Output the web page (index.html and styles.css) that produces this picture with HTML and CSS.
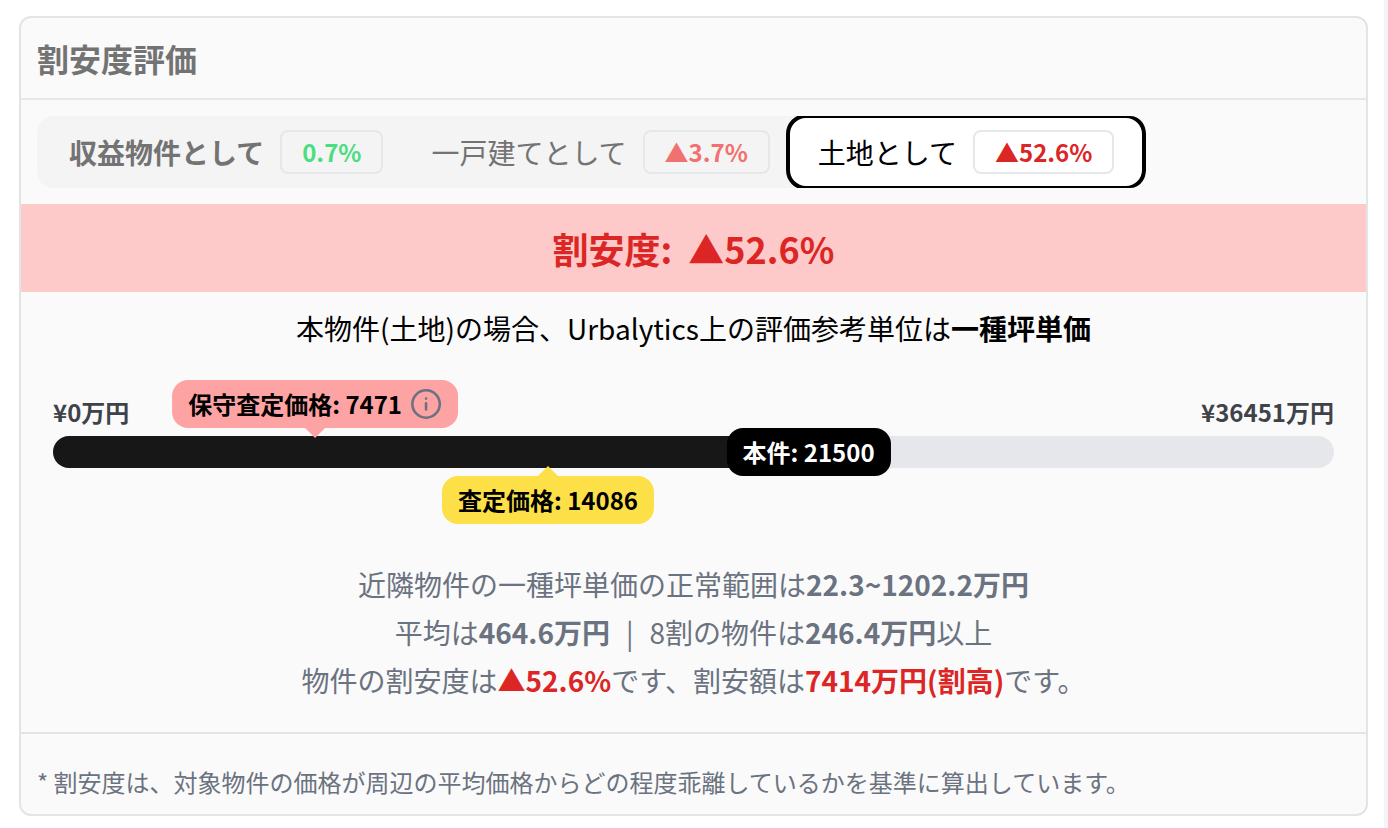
FILE: index.html
```html
<!DOCTYPE html>
<html lang="ja">
<head>
<meta charset="utf-8">
<meta name="viewport" content="width=device-width, initial-scale=1">
<title>割安度評価</title>
<link rel="stylesheet" href="styles.css">
</head>
<body>
<main class="page">
  <section class="card">
    <header class="card-header">
      <h1 class="card-title">割安度評価</h1>
    </header>
    <div class="tabs-row">
      <div class="tabs" role="tablist">
        <button class="tab tab-strong" type="button" role="tab" aria-selected="false">収益物件として<span class="badge badge-up">0.7%</span></button>
        <button class="tab" type="button" role="tab" aria-selected="false">一戸建てとして<span class="badge badge-down">▲3.7%</span></button>
        <button class="tab tab-active" type="button" role="tab" aria-selected="true">土地として<span class="badge badge-active">▲52.6%</span></button>
      </div>
    </div>
    <div class="banner"><span>割安度:</span><span>▲52.6%</span></div>
    <p class="lead">本物件(土地)の場合、Urbalytics上の評価参考単位は<b>一種坪単価</b></p>
    <div class="gauge">
      <div class="scale"><span>¥0万円</span><span>¥36451万円</span></div>
      <div class="track">
        <div class="fill" style="width: 58.98%"></div>
        <div class="marker marker-low" style="left: 20.46%">保守査定価格: 7471
          <svg class="info" viewBox="0 0 32 32" aria-hidden="true">
            <circle cx="16" cy="16" r="13.7"/>
            <path d="M16 15.2v6.2M16 10.5v.1"/>
          </svg>
        </div>
        <div class="marker marker-mid" style="left: 38.64%">査定価格: 14086</div>
        <div class="marker marker-own" style="left: 58.98%">本件: 21500</div>
      </div>
    </div>
    <div class="details">
      <p>近隣物件の一種坪単価の正常範囲は<b>22.3~1202.2万円</b></p>
      <p>平均は<b>464.6万円</b><span class="bar">|</span>8割の物件は<b>246.4万円</b>以上</p>
      <p>物件の割安度は<b class="alert">▲52.6%</b>です、割安額は<b class="alert">7414万円(割高)</b>です。</p>
    </div>
    <footer class="card-footer">* 割安度は、対象物件の価格が周辺の平均価格からどの程度乖離しているかを基準に算出しています。</footer>
  </section>
</main>
</body>
</html>
```
FILE: styles.css
```css
* {
  box-sizing: border-box;
}

body {
  margin: 0;
  background: #fff;
  color: #000;
  font-family: "Noto Sans CJK JP", sans-serif;
  font-size: 28px;
  line-height: 40px;
}

h1,
p {
  margin: 0;
}

b {
  font-weight: 700;
}

.page {
  min-height: 100vh;
  padding: 16px 16px 12px 19px;
  border-right: 4px solid #f4f4f5;
}

.card {
  border: 2px solid #e4e4e4;
  border-radius: 12px;
  background: #fafafa;
}

.card-header {
  padding: 20px 16px;
  border-bottom: 2px solid #e5e7eb;
}

.card-title {
  color: #737373;
  font-size: 32px;
  font-weight: 700;
  line-height: 40px;
}

.tabs-row {
  display: flex;
  padding: 16px;
}

.tabs {
  display: flex;
  height: 72px;
  overflow: hidden;
  border-radius: 16px;
  background: #f4f4f4;
}

.tab {
  display: flex;
  align-items: center;
  gap: 16px;
  padding: 0 16px 0 32px;
  border: 0;
  background: none;
  color: #737373;
  font: inherit;
  white-space: nowrap;
}

.tab-strong {
  font-weight: 700;
}

.tab-active {
  margin: -2px 0;
  padding: 0 28px;
  border: 4px solid #000;
  border-radius: 20px;
  background: #fff;
  color: #000;
}

.badge {
  padding: 4px 20px;
  border: 2px solid #e5e7eb;
  border-radius: 8px;
  font-size: 24px;
  font-weight: 700;
  line-height: 32px;
}

.badge-up {
  color: #4ade80;
}

.badge-down {
  color: #f17171;
}

.badge-active {
  color: #dc2626;
}

.banner {
  display: flex;
  justify-content: center;
  gap: 16px;
  padding: 24px 16px;
  background: #fec9c9;
  color: #dc2626;
  font-size: 36px;
  font-weight: 700;
}

.lead {
  padding: 16px 16px 0;
  text-align: center;
}

.gauge {
  padding: 48px 32px 0;
}

.scale {
  display: flex;
  justify-content: space-between;
  margin-bottom: 8px;
  color: #3f4249;
  font-size: 24px;
  font-weight: 700;
  line-height: 32px;
}

.track {
  position: relative;
  height: 32px;
  border-radius: 16px;
  background: #e5e7eb;
}

.fill {
  height: 100%;
  border-radius: 16px 0 0 16px;
  background: #171717;
}

.marker {
  position: absolute;
  display: flex;
  align-items: center;
  gap: 8px;
  height: 48px;
  padding: 0 16px;
  border-radius: 16px;
  font-size: 24px;
  font-weight: 700;
  white-space: nowrap;
  transform: translateX(-50%);
}

.marker-low {
  bottom: 40px;
  background: #fea3a3;
}

.marker-mid {
  top: 40px;
  background: #fde047;
}

.marker-own {
  top: -8px;
  background: #000;
  color: #fff;
}

.marker-low::after,
.marker-mid::after {
  content: "";
  position: absolute;
  left: 50%;
  border: 10px solid transparent;
  transform: translateX(-50%);
}

.marker-low::after {
  top: 100%;
  border-top-color: #fea3a3;
  border-bottom: 0;
}

.marker-mid::after {
  bottom: 100%;
  border-top: 0;
  border-bottom-color: #fde047;
}

.info {
  width: 32px;
  height: 32px;
  fill: none;
  stroke: #6b7280;
  stroke-width: 2.6;
  stroke-linecap: round;
}

.details {
  padding: 92px 16px 28px;
  border-bottom: 2px solid #e4e4e4;
  color: #6b7280;
  line-height: 48px;
  text-align: center;
}

.bar {
  margin: 0 16px;
}

.alert {
  color: #dc2626;
}

.card-footer {
  padding: 32px 16px 16px;
  color: #6b7280;
  font-size: 24px;
  line-height: 32px;
}
```
